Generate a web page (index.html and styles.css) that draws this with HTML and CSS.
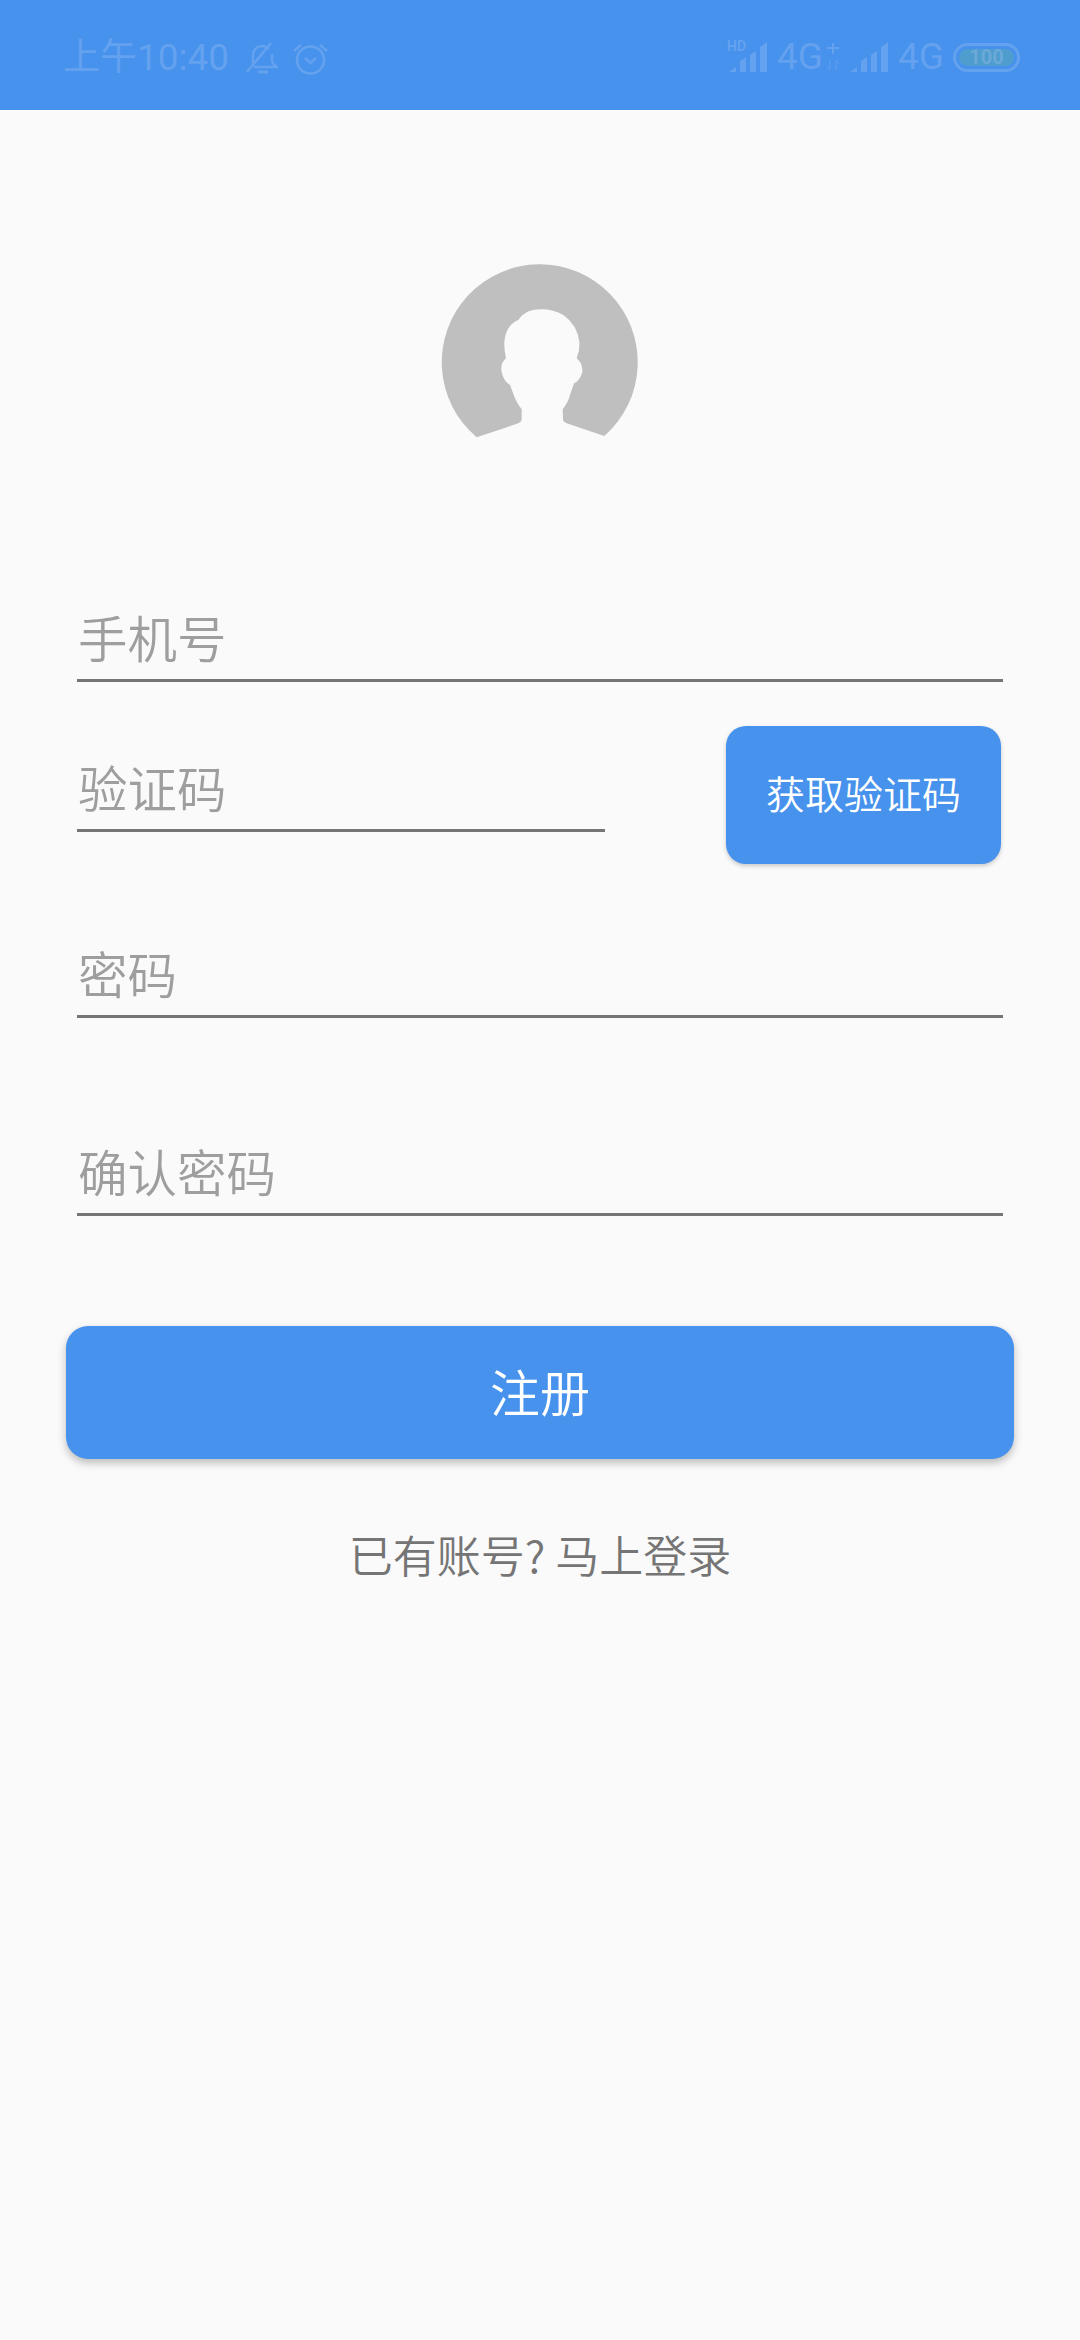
FILE: index.html
```html
<!DOCTYPE html>
<html lang="zh-CN">
<head>
    <meta charset="UTF-8">
    <meta name="viewport" content="width=device-width, initial-scale=1.0">
    <title>注册</title>
    <link rel="stylesheet" href="styles.css">
</head>
<body>
    <div class="status-bar">
        <div class="status-left">
            <span class="clock">上午10:40</span>
            <svg class="icon-bell" viewBox="0 0 32 32" fill="none" stroke="currentColor" stroke-width="2.6">
                <path d="M7 22V13c0-5 4-9 9-9 3 0 5 1 7 3M26 12v6c0 3 1 4 5 7H8"/>
                <path d="M1 30L25 1"/>
                <path d="M12 30h10" stroke-width="3"/>
            </svg>
            <svg class="icon-alarm" viewBox="0 0 35 33" fill="none" stroke="currentColor" stroke-width="2.6">
                <circle cx="17.500" cy="18" r="13.500"/>
                <path d="M12 16l5.500 5 5.500-5"/>
                <path d="M1 9l7-6M34 9l-7-6"/>
            </svg>
        </div>
        <div class="status-right">
            <span class="signal-wrap">
                <span class="hd">HD</span>
                <svg class="icon-signal" viewBox="0 0 40 30" fill="currentColor">
                    <path d="M1 30l7-5v5zM12 30V19l6-4v15zM22 30V13l6-4v21zM32 30V5l7-5v30z"/>
                </svg>
            </span>
            <span class="net">4G</span>
            <svg class="icon-arrows" viewBox="0 0 14 28" fill="none" stroke="currentColor" stroke-width="2">
                <path d="M7 0v11M1 5h12"/>
                <path d="M4 17v10M1 23l3 4M10 17v10M10 17l3 4" opacity="0.5"/>
            </svg>
            <svg class="icon-signal second" viewBox="0 0 40 30" fill="currentColor">
                <path d="M1 30l7-5v5zM12 30V19l6-4v15zM22 30V13l6-4v21zM32 30V5l7-5v30z"/>
            </svg>
            <span class="net">4G</span>
            <span class="battery"><span class="battery-level">100</span></span>
        </div>
    </div>

    <div class="avatar-wrap">
        <svg class="avatar" viewBox="0 0 720 600">
            <path fill="#bfbfbf" d="M170 562A294 294 0 1 1 553 558L440 520Q430 516 429 510L428 478Q444 458 450 435L462 400Q480 392 487 365Q488 340 470 325Q480 300 478 275Q472 225 430 195Q400 178 365 178Q335 178 320 187Q305 195 295 210Q258 225 253 275Q252 300 258 325Q240 340 245 365Q250 392 270 405L285 445Q292 462 305 478V510Q304 516 295 520Z"/>
        </svg>
    </div>

    <div class="form">
        <div class="field field-phone"><span class="hint">手机号</span></div>
        <div class="code-row">
            <div class="field field-code"><span class="hint">验证码</span></div>
            <div class="code-button">获取验证码</div>
        </div>
        <div class="field field-password"><span class="hint">密码</span></div>
        <div class="field field-confirm"><span class="hint">确认密码</span></div>
    </div>

    <div class="submit-button">注册</div>
    <div class="login-link">已有账号? 马上登录</div>
</body>
</html>
```

FILE: styles.css
```css
* {
    box-sizing: border-box;
}
body {
    margin: 0;
    height: 2340px;
    overflow: hidden;
    background: #fafafa;
    font-family: "Noto Sans CJK SC", "Noto Sans", sans-serif;
    font-weight: 350;
}

/* status bar */
.status-bar {
    display: flex;
    justify-content: space-between;
    align-items: center;
    height: 110px;
    padding: 0 60px 0 63px;
    background: #4792ec;
    color: #64a1ef;
}
.status-left, .status-right {
    display: flex;
    align-items: center;
}
.status-left {
    margin-top: 6px;
}
.status-right {
    margin-top: 4px;
}
.clock {
    font-family: "Roboto", "Noto Sans CJK SC", sans-serif;
    font-size: 37px;
    line-height: 40px;
    font-weight: 400;
}
.icon-bell {
    width: 32px;
    height: 32px;
    margin-left: 17px;
}
.icon-alarm {
    width: 35px;
    height: 33px;
    margin-left: 15px;
}
.signal-wrap {
    position: relative;
    display: flex;
}
.hd {
    position: absolute;
    left: -1px;
    top: -3px;
    font-family: "Roboto", sans-serif;
    font-size: 14px;
    line-height: 14px;
    font-weight: 700;
}
.icon-signal {
    width: 40px;
    height: 30px;
}
.icon-signal.second {
    margin-left: 9px;
}
.net {
    margin-left: 9px;
    font-family: "Roboto", sans-serif;
    font-size: 37px;
    line-height: 36px;
    font-weight: 400;
}
.icon-arrows {
    width: 14px;
    height: 28px;
    margin-left: 3px;
}
.battery {
    display: flex;
    align-items: center;
    justify-content: center;
    width: 67px;
    height: 29px;
    margin-left: 9px;
    border: 3px solid #64a1ef;
    border-radius: 15px;
    padding: 3px;
}
.battery-level {
    flex: 1;
    height: 100%;
    border-radius: 9px;
    background: #4f9dcf;
    color: #6ba9d8;
    font-family: "Roboto", sans-serif;
    font-size: 20px;
    line-height: 17px;
    font-weight: 700;
    text-align: center;
}

/* avatar */
.avatar-wrap {
    display: flex;
    justify-content: center;
    margin-top: 140px;
}
.avatar {
    display: block;
    width: 240px;
    height: 200px;
}

/* form */
.form {
    padding: 0 77px;
}
.field {
    display: flex;
    align-items: center;
    height: 72px;
    padding: 0 0 16px 1px;
    border-bottom: 3px solid #757575;
}
.hint {
    color: #9e9e9e;
    font-size: 49.500px;
    line-height: 60px;
}
.field-phone {
    margin-top: 160px;
}
.code-row {
    display: flex;
    justify-content: space-between;
    align-items: flex-start;
    margin-top: 44px;
    padding-right: 2px;
}
.field-code {
    width: 528px;
    margin-top: 34px;
}
.code-button {
    display: flex;
    align-items: center;
    justify-content: center;
    width: 275px;
    height: 138px;
    padding-bottom: 6px;
    border-radius: 20px;
    background: #4792ec;
    color: #fff;
    font-size: 39px;
    box-shadow: 0 2px 4px rgba(0, 0, 0, 0.2);
}
.field-password {
    margin-top: 82px;
}
.field-confirm {
    margin-top: 126px;
}

.submit-button {
    display: flex;
    align-items: center;
    justify-content: center;
    height: 133px;
    margin: 110px 66px 0;
    padding-bottom: 6px;
    border-radius: 22px;
    background: #4792ec;
    color: #fff;
    font-size: 50px;
    box-shadow: 0 4px 8px rgba(0, 0, 0, 0.25);
}
.login-link {
    margin-top: 65px;
    color: #757575;
    font-size: 44px;
    line-height: 60px;
    text-align: center;
}
```
